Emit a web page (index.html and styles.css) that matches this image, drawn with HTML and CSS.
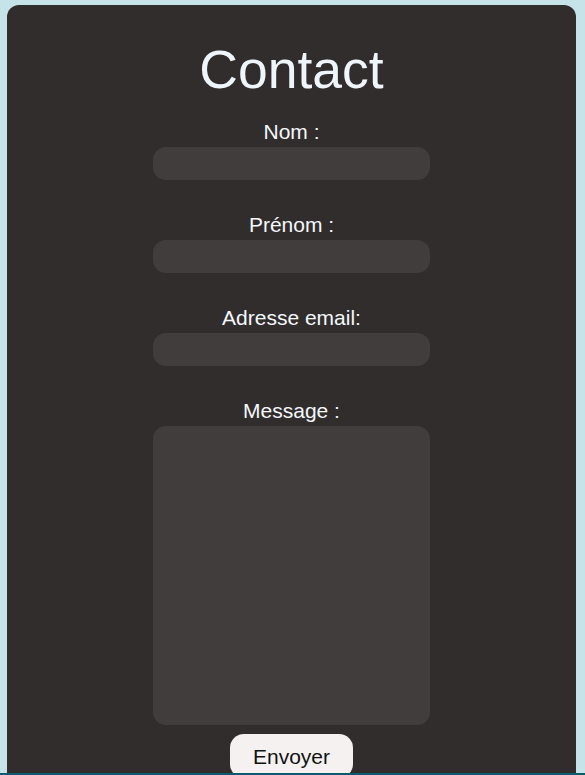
FILE: index.html
```html
<!DOCTYPE html>
<html lang="fr">
<head>
<meta charset="utf-8">
<title>Contact</title>
<link rel="stylesheet" href="styles.css">
</head>
<body>
<main class="card">
  <h1 class="title">Contact</h1>
  <form class="form">
    <div class="field">
      <label class="label" for="nom">Nom :</label>
      <input class="input" id="nom" type="text">
    </div>
    <div class="field">
      <label class="label" for="prenom">Prénom :</label>
      <input class="input" id="prenom" type="text">
    </div>
    <div class="field">
      <label class="label" for="email">Adresse email:</label>
      <input class="input" id="email" type="email">
    </div>
    <div class="field field-msg">
      <label class="label" for="message">Message :</label>
      <textarea class="input textarea" id="message"></textarea>
    </div>
    <button class="submit" type="submit">Envoyer</button>
  </form>
</main>
<footer class="footer"></footer>
</body>
</html>
```
FILE: styles.css
```css
html, body {
  margin: 0;
  padding: 0;
}
body {
  background: #c6e3e9;
  font-family: "Liberation Sans", Arial, sans-serif;
  overflow: hidden;
  height: 775px;
}
.card {
  margin: 5px 9px 0 7px;
  background: #312d2c;
  border-radius: 12px 12px 0 0;
  padding-top: 35px;
  height: 900px;
  box-sizing: border-box;
  display: flex;
  flex-direction: column;
  align-items: center;
}
.title {
  margin: 0 0 20px;
  font-size: 53.5px;
  line-height: 60px;
  font-weight: normal;
  color: #eef5fb;
}
.form {
  display: flex;
  flex-direction: column;
  align-items: center;
  gap: 33px;
}
.field {
  display: flex;
  flex-direction: column;
  align-items: center;
  gap: 4px;
}
.field-msg {
  margin-bottom: -24px;
}
.label {
  font-size: 21px;
  line-height: 23px;
  color: #f4f8fb;
}
.input {
  width: 277px;
  height: 33px;
  box-sizing: border-box;
  border: none;
  border-radius: 13px;
  background: #413d3c;
  outline: none;
  margin: 0;
  padding: 0 12px;
  font-family: inherit;
  font-size: 16px;
  color: #f4f8fb;
}
.textarea {
  height: 299px;
  resize: none;
  display: block;
}
.submit {
  width: 123px;
  height: 44px;
  box-sizing: border-box;
  border: none;
  border-radius: 14px;
  background: #f5f1f0;
  color: #111;
  font-family: inherit;
  font-size: 21px;
  line-height: 23px;
  padding: 11px 0 10px;
  margin: 0;
  text-align: center;
}
.footer {
  position: fixed;
  left: 0;
  right: 0;
  bottom: 0;
  height: 2px;
  background: #0b5c6b;
}
```
